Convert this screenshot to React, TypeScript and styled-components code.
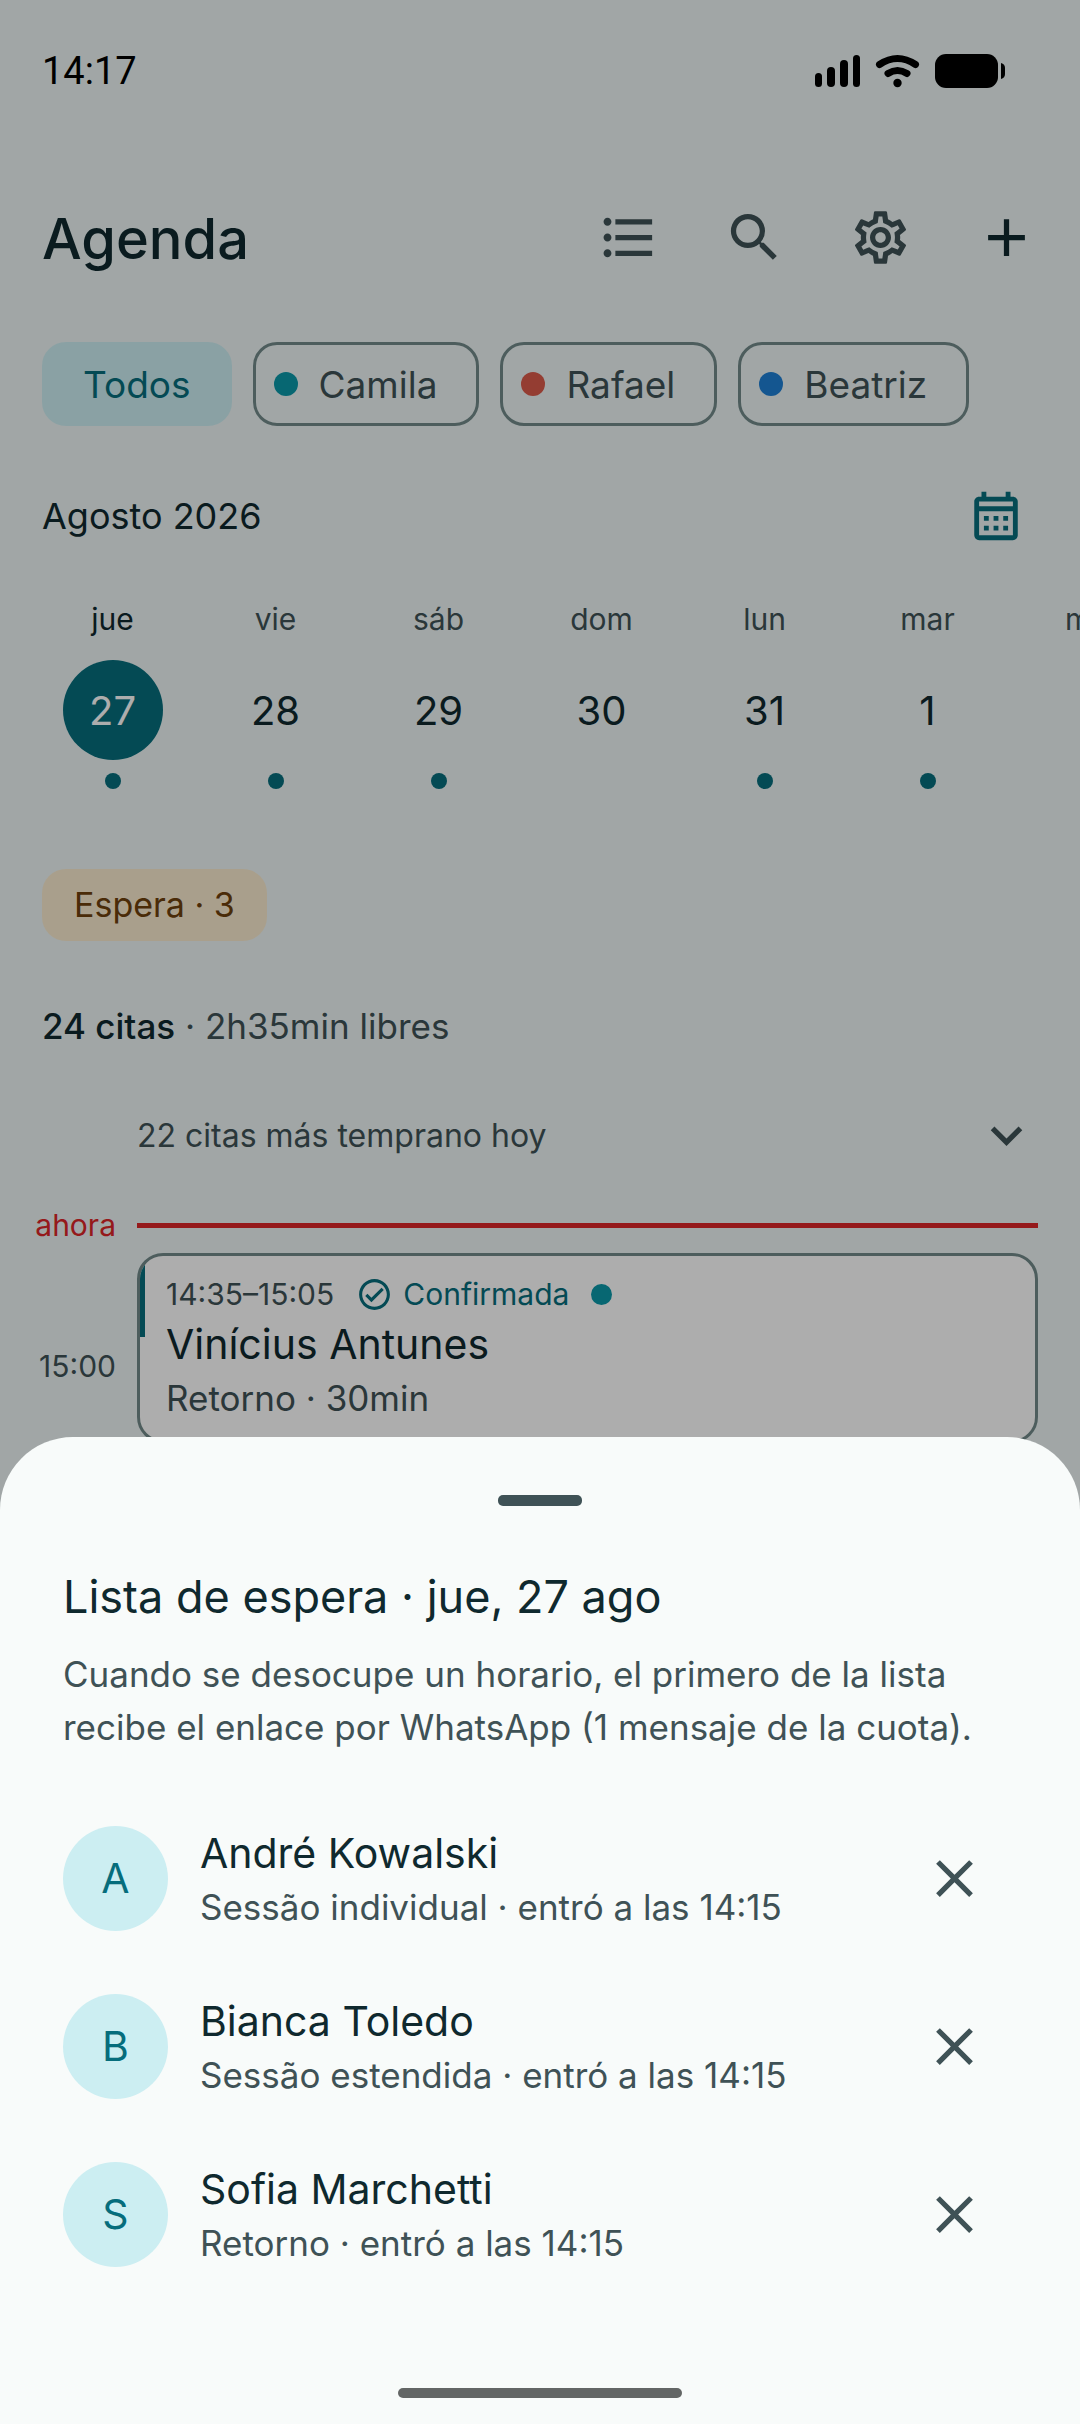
import React from 'react';
import styled, { createGlobalStyle, ThemeProvider } from 'styled-components';
import {
  MdAdd,
  MdClose,
  MdExpandMore,
  MdFormatListBulleted,
  MdOutlineCalendarMonth,
  MdOutlineCheckCircle,
  MdOutlineSettings,
  MdSearch,
} from 'react-icons/md';

const theme = {
  background: '#edf5f5',
  sheet: '#f8fbfa',
  card: '#ffffff',
  text: '#0f292e',
  muted: '#3f5256',
  outline: '#728a8a',
  primary: '#066d7c',
  primarySoft: '#cceef2',
  waitSoft: '#faebcf',
  waitText: '#6d400c',
  now: '#dc2528',
};

type Theme = typeof theme;

declare module 'styled-components' {
  export interface DefaultTheme extends Theme {}
}

const GlobalStyle = createGlobalStyle`
  *, *::before, *::after { box-sizing: border-box; }
  html, body { margin: 0; background: ${theme.background}; }
  body {
    font-family: Inter, Roboto, "Liberation Sans", sans-serif;
    font-size: 35px;
    color: ${theme.text};
  }
  button {
    font: inherit;
    color: inherit;
    background: none;
    border: 0;
    padding: 0;
    margin: 0;
    cursor: pointer;
  }
  h1, h2, h3, p, ul { margin: 0; padding: 0; font-weight: 400; }
  ul { list-style: none; }
`;

const Screen = styled.div`
  min-height: 100vh;
  overflow: hidden;
`;

const StatusBar = styled.div`
  display: flex;
  align-items: center;
  justify-content: space-between;
  height: 142px;
  padding: 0 74px 0 42px;
  font-family: Roboto, sans-serif;
  font-size: 38px;
  color: #000;
`;

const StatusIcons = styled.svg`
  width: 192px;
  height: 36px;
  display: block;
`;

const Header = styled.header`
  display: flex;
  align-items: center;
  margin-top: 32px;
  padding: 0 11px 0 42px;
`;

const Title = styled.h1`
  flex: 1;
  padding-top: 4px;
  font-size: 56px;
  font-weight: 500;
  line-height: 72px;
`;

const IconButton = styled.button<{ $strong?: boolean }>`
  display: grid;
  place-items: center;
  width: 126px;
  height: 126px;
  color: ${p => (p.$strong ? p.theme.text : p.theme.muted)};

  svg { width: 63px; height: 63px; }
`;

const Chips = styled.div`
  display: flex;
  gap: 21px;
  margin-top: 42px;
  padding: 0 42px;
`;

const Chip = styled.button<{ $selected?: boolean }>`
  display: flex;
  align-items: center;
  gap: 21px;
  height: 84px;
  padding: ${p => (p.$selected ? '0 38px' : '0 39px 0 18px')};
  border: 3px solid ${p => (p.$selected ? p.theme.primarySoft : p.theme.outline)};
  border-radius: 24px;
  font-size: 37px;
  background: ${p => (p.$selected ? p.theme.primarySoft : 'transparent')};
  color: ${p => (p.$selected ? p.theme.primary : p.theme.muted)};
`;

const Dot = styled.span<{ $color: string; $size: number }>`
  flex: none;
  width: ${p => p.$size}px;
  height: ${p => p.$size}px;
  border-radius: 50%;
  background: ${p => p.$color};
`;

const MonthBar = styled.div`
  display: flex;
  align-items: center;
  justify-content: space-between;
  margin-top: 48px;
  padding: 0 42px;
`;

const Month = styled.h2`
  font-size: 36px;
`;

const CalendarButton = styled(IconButton)`
  width: 84px;
  height: 84px;
  color: ${p => p.theme.primary};

  svg { width: 58px; height: 58px; }
`;

const Days = styled.div`
  display: flex;
  margin-top: 40px;
  padding-left: 31px;
  overflow: hidden;
`;

const Day = styled.button`
  display: flex;
  flex: none;
  flex-direction: column;
  align-items: center;
  width: 163px;
`;

const Weekday = styled.span<{ $selected: boolean }>`
  font-size: 30px;
  line-height: 42px;
  color: ${p => (p.$selected ? p.theme.text : p.theme.muted)};
`;

const DayNumber = styled.span<{ $selected: boolean }>`
  display: grid;
  place-items: center;
  width: 100px;
  height: 100px;
  margin: 20px 0 13px;
  border-radius: 50%;
  font-size: 40px;
  background: ${p => (p.$selected ? p.theme.primary : 'transparent')};
  color: ${p => (p.$selected ? '#fff' : p.theme.text)};
`;

const WaitChip = styled.button`
  display: block;
  margin: 80px 42px 0;
  padding: 14px 32px;
  border-radius: 24px;
  font-size: 34px;
  line-height: 44px;
  background: ${p => p.theme.waitSoft};
  color: ${p => p.theme.waitText};
`;

const Summary = styled.p`
  margin-top: 60px;
  padding: 0 42px;
  line-height: 50px;
  color: ${p => p.theme.muted};

  strong { font-weight: 500; color: ${p => p.theme.text}; }
`;

const Earlier = styled.button`
  display: flex;
  align-items: center;
  justify-content: space-between;
  width: 100%;
  height: 84px;
  margin-top: 42px;
  padding: 0 42px 0 137px;
  font-size: 32px;
  color: ${p => p.theme.muted};

  svg { width: 63px; height: 63px; }
`;

const TimelineRow = styled.div`
  display: grid;
  grid-template-columns: 116px 1fr;
  column-gap: 21px;
  padding-right: 42px;
`;

const NowRow = styled(TimelineRow)`
  align-items: center;
  height: 41px;
  margin: 28px 0 7px;
`;

const TimeLabel = styled.span<{ $now?: boolean }>`
  font-size: 30px;
  line-height: 41px;
  text-align: right;
  color: ${p => (p.$now ? p.theme.now : p.theme.muted)};
`;

const HourLabel = styled(TimeLabel)`
  margin-top: 93px;
`;

const NowLine = styled.span`
  height: 5px;
  background: ${p => p.theme.now};
`;

const Card = styled.article`
  position: relative;
  overflow: hidden;
  padding: 16px 26px;
  border: 3px solid ${p => p.theme.outline};
  border-radius: 26px;
  background: ${p => p.theme.card};

  &::before {
    content: '';
    position: absolute;
    top: 0;
    left: 0;
    width: 5px;
    height: 81px;
    background: ${p => p.theme.primary};
  }
`;

const CardMeta = styled.div`
  display: flex;
  align-items: center;
  gap: 22px;
  font-size: 30px;
  line-height: 44px;
  color: ${p => p.theme.muted};
`;

const Status = styled.span`
  display: flex;
  align-items: center;
  gap: 10px;
  color: ${p => p.theme.primary};

  svg { width: 37px; height: 37px; }
`;

const CardName = styled.h3`
  font-size: 41px;
  line-height: 56px;
`;

const CardDetail = styled.p`
  line-height: 52px;
  color: ${p => p.theme.muted};
`;

const Scrim = styled.div`
  position: fixed;
  inset: 0;
  display: flex;
  flex-direction: column;
  justify-content: flex-end;
  background: rgba(0, 0, 0, 0.32);
`;

const Sheet = styled.section`
  padding: 58px 63px 26px;
  border-radius: 73px 73px 0 0;
  background: ${p => p.theme.sheet};
`;

const Handle = styled.div`
  width: 84px;
  height: 11px;
  margin: 0 auto;
  border-radius: 5px;
  background: ${p => p.theme.muted};
`;

const SheetTitle = styled.h2`
  margin-top: 62px;
  font-size: 45px;
  line-height: 58px;
`;

const SheetText = styled.p`
  margin-top: 22px;
  line-height: 53px;
  color: ${p => p.theme.muted};
`;

const WaitList = styled.ul`
  margin-top: 40px;
`;

const WaitItem = styled.li`
  display: flex;
  align-items: center;
  height: 168px;
`;

const Avatar = styled.span`
  display: grid;
  place-items: center;
  flex: none;
  width: 105px;
  height: 105px;
  border-radius: 50%;
  font-size: 41px;
  background: ${p => p.theme.primarySoft};
  color: ${p => p.theme.primary};
`;

const Person = styled.div`
  flex: 1;
  padding: 4px 0 0 32px;
  line-height: 54px;
`;

const PersonName = styled.h3`
  font-size: 41px;
`;

const PersonDetail = styled.p`
  color: ${p => p.theme.muted};
`;

const HomeIndicator = styled.div`
  width: 284px;
  height: 10px;
  margin: 90px auto 0;
  border-radius: 5px;
  background: #636665;
`;

const professionals = [
  { name: 'Camila', color: '#0b98a9' },
  { name: 'Rafael', color: '#da5a4b' },
  { name: 'Beatriz', color: '#1e7fd4' },
];

const days = [
  { weekday: 'jue', day: 27, busy: true },
  { weekday: 'vie', day: 28, busy: true },
  { weekday: 'sáb', day: 29, busy: true },
  { weekday: 'dom', day: 30, busy: false },
  { weekday: 'lun', day: 31, busy: true },
  { weekday: 'mar', day: 1, busy: true },
  { weekday: 'mié', day: 2, busy: false },
];

const waiting = [
  { name: 'André Kowalski', service: 'Sessão individual' },
  { name: 'Bianca Toledo', service: 'Sessão estendida' },
  { name: 'Sofia Marchetti', service: 'Retorno' },
];

const selectedDay = 27;

function DeviceStatus() {
  return (
    <StatusIcons viewBox="814 53 192 36" aria-hidden="true">
      <rect x="815" y="73" width="7" height="14" rx="3.5" />
      <rect x="827" y="67" width="8" height="20" rx="4" />
      <rect x="840" y="60" width="8" height="27" rx="4" />
      <rect x="853" y="55" width="7" height="32" rx="3.5" />
      <g fill="none" stroke="#000" strokeWidth="7" strokeLinecap="round">
        <path d="M879.500 64.500Q897.500 52.500 915.500 64.500" />
        <path d="M888 73.500Q897.500 67.500 907 73.500" />
      </g>
      <circle cx="897.500" cy="83" r="4.200" />
      <rect x="935" y="54" width="63" height="34" rx="11" />
      <path d="M1001 63q4 1 4 5v6q0 4-4 5z" />
    </StatusIcons>
  );
}

function Agenda() {
  return (
    <Screen>
      <StatusBar>
        <span>14:17</span>
        <DeviceStatus />
      </StatusBar>
      <Header>
        <Title>Agenda</Title>
        <IconButton aria-label="Ver como lista"><MdFormatListBulleted /></IconButton>
        <IconButton aria-label="Buscar"><MdSearch /></IconButton>
        <IconButton aria-label="Ajustes"><MdOutlineSettings /></IconButton>
        <IconButton $strong aria-label="Nueva cita"><MdAdd /></IconButton>
      </Header>
      <Chips>
        <Chip $selected>Todos</Chip>
        {professionals.map(p => (
          <Chip key={p.name}>
            <Dot $color={p.color} $size={24} />
            {p.name}
          </Chip>
        ))}
      </Chips>
      <MonthBar>
        <Month>Agosto 2026</Month>
        <CalendarButton aria-label="Abrir calendario"><MdOutlineCalendarMonth /></CalendarButton>
      </MonthBar>
      <Days>
        {days.map(d => (
          <Day key={d.day}>
            <Weekday $selected={d.day === selectedDay}>{d.weekday}</Weekday>
            <DayNumber $selected={d.day === selectedDay}>{d.day}</DayNumber>
            <Dot $color={d.busy ? theme.primary : 'transparent'} $size={16} />
          </Day>
        ))}
      </Days>
      <WaitChip>Espera · 3</WaitChip>
      <Summary><strong>24 citas</strong> · 2h35min libres</Summary>
      <Earlier>
        22 citas más temprano hoy
        <MdExpandMore />
      </Earlier>
      <NowRow>
        <TimeLabel $now>ahora</TimeLabel>
        <NowLine />
      </NowRow>
      <TimelineRow>
        <HourLabel>15:00</HourLabel>
        <Card>
          <CardMeta>
            14:35–15:05
            <Status><MdOutlineCheckCircle />Confirmada</Status>
            <Dot $color={professionals[0].color} $size={21} />
          </CardMeta>
          <CardName>Vinícius Antunes</CardName>
          <CardDetail>Retorno · 30min</CardDetail>
        </Card>
      </TimelineRow>
    </Screen>
  );
}

function WaitingSheet() {
  return (
    <Scrim>
      <Sheet role="dialog" aria-labelledby="wait-title">
        <Handle />
        <SheetTitle id="wait-title">Lista de espera · jue, 27 ago</SheetTitle>
        <SheetText>
          Cuando se desocupe un horario, el primero de la lista recibe el enlace por WhatsApp (1 mensaje de la cuota).
        </SheetText>
        <WaitList>
          {waiting.map(w => (
            <WaitItem key={w.name}>
              <Avatar>{w.name[0]}</Avatar>
              <Person>
                <PersonName>{w.name}</PersonName>
                <PersonDetail>{w.service} · entró a las 14:15</PersonDetail>
              </Person>
              <IconButton aria-label={`Quitar a ${w.name}`}><MdClose /></IconButton>
            </WaitItem>
          ))}
        </WaitList>
        <HomeIndicator />
      </Sheet>
    </Scrim>
  );
}

export default function App() {
  return (
    <ThemeProvider theme={theme}>
      <GlobalStyle />
      <Agenda />
      <WaitingSheet />
    </ThemeProvider>
  );
}
